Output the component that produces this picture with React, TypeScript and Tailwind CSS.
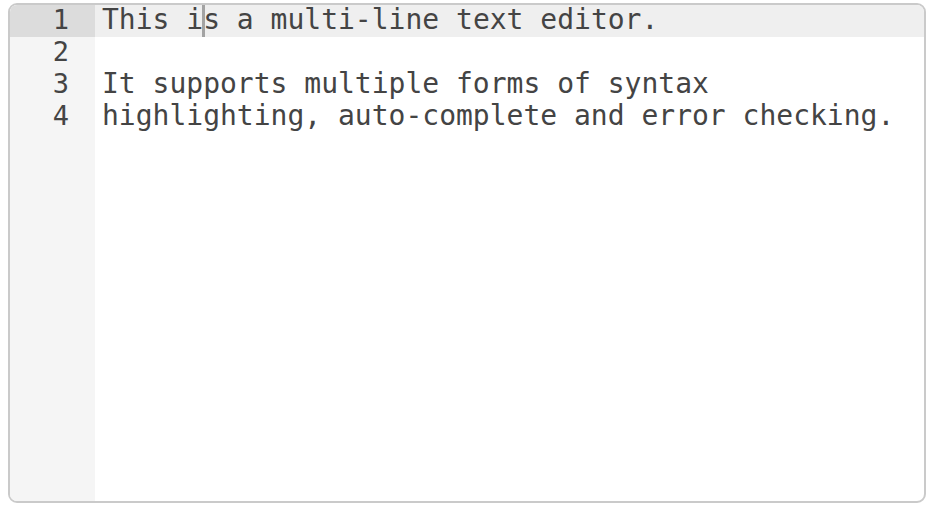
const LINES = [
  "This is a multi-line text editor.",
  "",
  "It supports multiple forms of syntax",
  "highlighting, auto-complete and error checking.",
];

export default function App() {
  return (
    <div className="w-[934px] h-[506px] bg-white pt-[3px] pl-[8px]">
      <div
        className="w-[918px] h-[500px] border-2 border-[#cacaca] rounded-[9px] overflow-hidden flex bg-white text-[#444444]"
        style={{ fontFamily: '"DejaVu Sans Mono", monospace' }}
      >
        {/* gutter */}
        <div className="w-[85px] shrink-0 bg-[#f5f5f5] flex flex-col">
          {LINES.map((_, i) => (
            <div
              key={i}
              className={`h-[32px] leading-[30px] text-[27px] text-right pr-[26px] ${
                i === 0 ? "bg-[#dcdcdc]" : ""
              }`}
            >
              {i + 1}
            </div>
          ))}
        </div>
        {/* content */}
        <div className="flex-1 flex flex-col">
          {LINES.map((line, i) => (
            <div
              key={i}
              className={`relative h-[32px] leading-[30px] text-[28px] pl-[7px] whitespace-pre ${
                i === 0 ? "bg-[#efefef]" : ""
              }`}
            >
              {i === 0 ? (
                <>
                  This i
                  <span className="inline-block w-[3px] h-[32px] bg-[#a3a3a3] align-top -mx-[1.5px]" />
                  s a multi-line text editor.
                </>
              ) : (
                line || " "
              )}
            </div>
          ))}
        </div>
      </div>
    </div>
  );
}
